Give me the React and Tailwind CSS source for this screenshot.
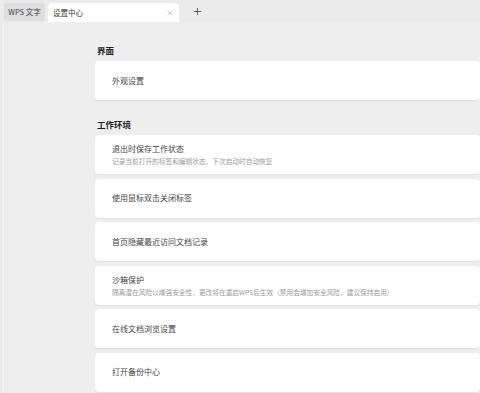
import { X, Plus } from 'lucide-react'

const font = { fontFamily: '"Noto Sans CJK SC", "Noto Sans", sans-serif' }

function Card({ title, desc }) {
  return (
    <div className="mb-[4.5px] flex h-[39px] flex-col justify-center rounded-[4px] bg-white px-[17px] shadow-[0_1px_1px_rgba(0,0,0,0.06)]">
      <div className="text-[8px] leading-[12px] text-[#444]">{title}</div>
      {desc && <div className="mt-[1px] text-[6.7px] leading-[10px] text-[#9a9a9a]">{desc}</div>}
    </div>
  )
}

function Section({ title, children }) {
  return (
    <div className="mb-[18px]">
      <div className="mb-[5px] ml-[2px] text-[8.5px] font-bold leading-[12px] text-[#222]">{title}</div>
      {children}
    </div>
  )
}

export default function App() {
  return (
    <div className="flex h-[393px] w-[480px] flex-col overflow-hidden bg-[#ebebeb]" style={font}>
      {/* 标签栏 */}
      <div className="flex h-[22px] shrink-0 items-end gap-[3px] pl-[4px]">
        <div className="mb-[1px] flex h-[18px] w-[41px] items-center justify-center rounded-[3px] bg-[#dedede] text-[7.5px] text-[#444]">
          WPS 文字
        </div>
        <div className="flex h-[19px] w-[131px] items-center justify-between rounded-t-[4px] bg-white pl-[5px] pr-[5px] text-[7.5px] text-[#333]">
          <span>设置中心</span>
          <X size={8} strokeWidth={1.5} className="text-[#999]" />
        </div>
        <div className="mb-[5px] ml-[10px] flex items-center">
          <Plus size={11} strokeWidth={1.6} className="text-[#333]" />
        </div>
      </div>

      {/* 内容 */}
      <div className="ml-[3px] flex-1 border-l border-[#f7f7f7] bg-[#eeeeee] pl-[91px] pt-[22px]">
        <Section title="界面">
          <Card title="外观设置" />
        </Section>
        <Section title="工作环境">
          <Card title="退出时保存工作状态" desc="记录当前打开的标签和编辑状态，下次启动时自动恢复" />
          <Card title="使用鼠标双击关闭标签" />
          <Card title="首页隐藏最近访问文档记录" />
          <Card title="沙箱保护" desc="隔离潜在风险以增强安全性，更改将在重启WPS后生效（禁用会增加安全风险，建议保持启用）" />
          <Card title="在线文档浏览设置" />
          <Card title="打开备份中心" />
        </Section>
      </div>
    </div>
  )
}
